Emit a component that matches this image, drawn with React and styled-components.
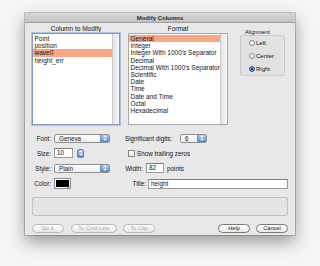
import React from "react";
import styled, { createGlobalStyle, css } from "styled-components";

const Global = createGlobalStyle`
  body {
    margin: 0;
    background: #f6f6f6;
    font-family: "Liberation Sans", Arial, sans-serif;
    color: #141414;
  }
`;

const Page = styled.div`
  width: 320px;
  height: 266px;
  padding: 13px 0 0 25px;
  box-sizing: border-box;
`;

const Window = styled.div`
  width: 270px;
  height: 222px;
  background: #e8e8e8;
  box-shadow: 0 7px 16px rgba(0, 0, 0, 0.38), 0 0 0 1px rgba(0, 0, 0, 0.18);
  display: flex;
  flex-direction: column;
`;

const TitleBar = styled.div`
  height: 10px;
  background: linear-gradient(#d9d9d9, #c2c2c2);
  border-bottom: 1px solid #a0a0a0;
  box-sizing: border-box;
  font-size: 6px;
  font-weight: bold;
  line-height: 10px;
  text-align: center;
  color: #2a2a2a;
`;

const Body = styled.div`
  flex: 1;
  padding: 0 7px;
  display: flex;
  flex-direction: column;
`;

const TopSection = styled.div`
  display: flex;
  align-items: flex-start;
`;

const ListColumn = styled.div`
  width: ${(p) => p.w}px;
  margin-right: ${(p) => p.gap || 0}px;
  display: flex;
  flex-direction: column;
`;

const ColumnLabel = styled.div`
  height: 10px;
  line-height: 11px;
  font-size: 6.5px;
  text-align: center;
`;

const ListBox = styled.div`
  height: 92px;
  box-sizing: border-box;
  background: #fff;
  display: flex;
  ${(p) =>
    p.focused
      ? css`
          border: 1px solid #7d9ccc;
          box-shadow: 0 0 0 1px #a9c2e6;
        `
      : css`
          border: 1px solid #a8a8a8;
        `}
`;

const Rows = styled.div`
  flex: 1;
  padding-top: 1px;
`;

const Row = styled.div`
  height: 7.2px;
  line-height: 7.2px;
  font-size: 6.5px;
  padding-left: 1.5px;
  white-space: nowrap;
  background: ${(p) => (p.selected ? "#f9a684" : "transparent")};
`;

const ScrollTrack = styled.div`
  width: 6px;
  border-left: 1px solid #c9c9c9;
  background: linear-gradient(90deg, #e4e4e4, #f7f7f7);
`;

const AlignColumn = styled.div`
  width: 45px;
  margin-left: 12px;
  padding-top: 6px;
`;

const GroupLabel = styled.div`
  font-size: 5.6px;
  line-height: 6px;
  padding-left: 5px;
`;

const GroupBox = styled.div`
  height: 41px;
  box-sizing: border-box;
  background: #e1e1e1;
  border: 1px solid #cacaca;
  border-radius: 2px;
  padding: 4px 0 0 8px;
  display: flex;
  flex-direction: column;
  gap: 7px;
`;

const RadioRow = styled.label`
  display: flex;
  align-items: center;
  gap: 1px;
  height: 6px;
  font-size: 6px;
`;

const RadioDot = styled.span`
  width: 6px;
  height: 6px;
  box-sizing: border-box;
  border-radius: 50%;
  display: inline-flex;
  align-items: center;
  justify-content: center;
  ${(p) =>
    p.on
      ? css`
          background: radial-gradient(circle at 50% 40%, #9cc0ee, #3a79cf);
          border: 1px solid #2f5f9f;
          &::after {
            content: "";
            width: 2px;
            height: 2px;
            border-radius: 50%;
            background: #102040;
          }
        `
      : css`
          background: linear-gradient(#fdfdfd, #e6e6e6);
          border: 1px solid #8a8a8a;
        `}
`;

const LowerSection = styled.div`
  display: flex;
  margin-top: 8px;
`;

const FormColumn = styled.div`
  width: ${(p) => p.w}px;
  display: flex;
  flex-direction: column;
  gap: 5px;
`;

const FormRow = styled.div`
  height: ${(p) => p.h || 10}px;
  display: flex;
  align-items: center;
  font-size: 6.3px;
  white-space: nowrap;
`;

const FieldLabel = styled.span`
  width: ${(p) => p.w}px;
  text-align: ${(p) => p.align || "right"};
  margin-right: ${(p) => (p.gap === undefined ? 3 : p.gap)}px;
  flex-shrink: 0;
`;

const Popup = styled.div`
  width: ${(p) => p.w}px;
  height: 9px;
  box-sizing: border-box;
  border: 1px solid #8f8f8f;
  border-radius: 2px;
  background: linear-gradient(#ffffff, #efefef);
  display: flex;
  align-items: center;
  font-size: 6.3px;
  overflow: hidden;
`;

const PopupText = styled.span`
  flex: 1;
  padding-left: 4px;
`;

const Arrows = styled.span`
  width: 8px;
  height: 100%;
  background: linear-gradient(#a9c9f1, #4f8ad9);
  border-left: 1px solid #6d8fbf;
  display: flex;
  align-items: center;
  justify-content: center;
`;

const Stepper = styled(Arrows)`
  width: 7px;
  height: 9px;
  margin-left: 4px;
  border: 1px solid #5a7fb5;
  border-radius: 2px;
  box-sizing: border-box;
`;

const TextField = styled.div`
  width: ${(p) => (p.w ? `${p.w}px` : "auto")};
  flex: ${(p) => (p.w ? "0 0 auto" : 1)};
  height: 10px;
  box-sizing: border-box;
  background: #fff;
  border: 1px solid #9a9a9a;
  border-top-color: #7c7c7c;
  padding-left: 2px;
  font-size: 6.3px;
  line-height: 8px;
`;

const Swatch = styled.div`
  width: 17px;
  height: 11px;
  box-sizing: border-box;
  border: 1px solid #8c8c8c;
  background: #fff;
  padding: 1px;
  position: relative;
  &::before {
    content: "";
    display: block;
    width: 100%;
    height: 100%;
    background: #000;
  }
  &::after {
    content: "";
    position: absolute;
    right: 0;
    bottom: 0;
    border-left: 2px solid transparent;
    border-right: 2px solid transparent;
    border-top: 2px solid #333;
  }
`;

const CheckBox = styled.span`
  width: 5px;
  height: 5px;
  border: 1px solid #8a8a8a;
  background: linear-gradient(#fff, #e8e8e8);
  margin: 0 2px 0 3px;
  flex-shrink: 0;
`;

const Suffix = styled.span`
  margin-left: 3px;
`;

const MessageBox = styled.div`
  margin-top: 8px;
  height: 19px;
  box-sizing: border-box;
  border: 1px solid #c2c2c2;
  border-radius: 2px;
  background: #e4e4e4;
`;

const ButtonBar = styled.div`
  margin-top: 8px;
  display: flex;
  align-items: center;
`;

const Button = styled.button`
  width: ${(p) => p.w || 32}px;
  height: 9px;
  margin-right: ${(p) => p.gap || 0}px;
  margin-left: ${(p) => (p.push ? "auto" : "0")};
  padding: 0;
  border-radius: 5px;
  border: 1px solid ${(p) => (p.disabled ? "#b8b8b8" : "#7a7a7a")};
  background: linear-gradient(#ffffff, #e6e6e6);
  color: ${(p) => (p.disabled ? "#a6a6a6" : "#222")};
  font-family: "Liberation Sans", Arial, sans-serif;
  font-size: 5.6px;
  line-height: 7px;
`;

const ArrowGlyph = () => (
  <svg width="4" height="6" viewBox="0 0 4 6">
    <path d="M0 2.3 L2 0.3 L4 2.3 Z M0 3.7 L2 5.7 L4 3.7 Z" fill="#fff" />
  </svg>
);

const columns = ["Point", "position", "wave0", "height_err"];
const formats = [
  "General",
  "Integer",
  "Integer With 1000's Separator",
  "Decimal",
  "Decimal With 1000's Separator",
  "Scientific",
  "Date",
  "Time",
  "Date and Time",
  "Octal",
  "Hexadecimal",
];

export default function App() {
  return (
    <Page>
      <Global />
      <Window>
        <TitleBar>Modify Columns</TitleBar>
        <Body>
          <TopSection>
            <ListColumn w={88} gap={8}>
              <ColumnLabel>Column to Modify</ColumnLabel>
              <ListBox focused>
                <Rows>
                  {columns.map((c) => (
                    <Row key={c} selected={c === "wave0"}>
                      {c}
                    </Row>
                  ))}
                </Rows>
                <ScrollTrack />
              </ListBox>
            </ListColumn>
            <ListColumn w={100}>
              <ColumnLabel>Format</ColumnLabel>
              <ListBox>
                <Rows>
                  {formats.map((f) => (
                    <Row key={f} selected={f === "General"}>
                      {f}
                    </Row>
                  ))}
                </Rows>
                <ScrollTrack />
              </ListBox>
            </ListColumn>
            <AlignColumn>
              <GroupLabel>Alignment</GroupLabel>
              <GroupBox>
                <RadioRow>
                  <RadioDot />
                  Left
                </RadioRow>
                <RadioRow>
                  <RadioDot />
                  Center
                </RadioRow>
                <RadioRow>
                  <RadioDot on />
                  Right
                </RadioRow>
              </GroupBox>
            </AlignColumn>
          </TopSection>

          <LowerSection>
            <FormColumn w={93}>
              <FormRow>
                <FieldLabel w={19}>Font:</FieldLabel>
                <Popup w={56}>
                  <PopupText>Geneva</PopupText>
                  <Arrows>
                    <ArrowGlyph />
                  </Arrows>
                </Popup>
              </FormRow>
              <FormRow>
                <FieldLabel w={19}>Size:</FieldLabel>
                <TextField w={19}>10</TextField>
                <Stepper>
                  <ArrowGlyph />
                </Stepper>
              </FormRow>
              <FormRow>
                <FieldLabel w={19}>Style:</FieldLabel>
                <Popup w={56}>
                  <PopupText>Plain</PopupText>
                  <Arrows>
                    <ArrowGlyph />
                  </Arrows>
                </Popup>
              </FormRow>
              <FormRow h={11}>
                <FieldLabel w={19}>Color:</FieldLabel>
                <Swatch />
              </FormRow>
            </FormColumn>
            <FormColumn w={163}>
              <FormRow>
                <FieldLabel w={53} align="left" gap={2}>
                  Significant digits:
                </FieldLabel>
                <Popup w={27}>
                  <PopupText>6</PopupText>
                  <Arrows>
                    <ArrowGlyph />
                  </Arrows>
                </Popup>
              </FormRow>
              <FormRow>
                <CheckBox />
                Show trailing zeros
              </FormRow>
              <FormRow>
                <FieldLabel w={18}>Width:</FieldLabel>
                <TextField w={18}>82</TextField>
                <Suffix>points</Suffix>
              </FormRow>
              <FormRow h={11}>
                <FieldLabel w={21} gap={2}>
                  Title:
                </FieldLabel>
                <TextField>height</TextField>
              </FormRow>
            </FormColumn>
          </LowerSection>

          <MessageBox />

          <ButtonBar>
            <Button disabled gap={7}>
              Do It
            </Button>
            <Button disabled w={46} gap={6}>
              To Cmd Line
            </Button>
            <Button disabled>To Clip</Button>
            <Button push gap={6}>
              Help
            </Button>
            <Button>Cancel</Button>
          </ButtonBar>
        </Body>
      </Window>
    </Page>
  );
}
